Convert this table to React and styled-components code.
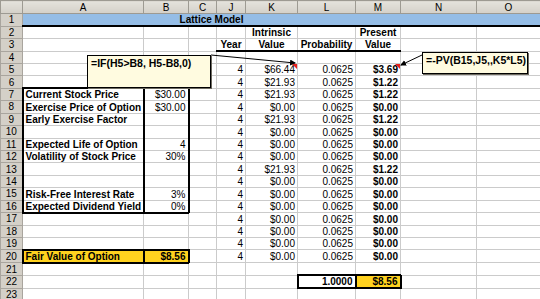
import React from 'react';
import styled, { createGlobalStyle } from "styled-components";

const GlobalStyle = createGlobalStyle`
  html, body {
    margin: 0;
    padding: 0;
    background: #d4d0c8;
  }
`

const Sheet = styled.div`
  position: relative;
  width: 540px;
  height: 299px;
  overflow: hidden;
  background: #d4d0c8;
  font-family: "Liberation Sans", Arial, sans-serif;
`

const Grid = styled.table`
  border-collapse: collapse;
  table-layout: fixed;
  width: 540px;
  background: #fff;
`

const HeadRow = styled.tr`
  height: 13px;
`

const Row = styled.tr`
  height: 12.43px;
`

const ColHead = styled.th`
  background: linear-gradient(#e4e2dc, #d4d0c8);
  border: 1px solid #9d9a92;
  font-weight: normal;
  font-size: 10px;
  line-height: 11px;
  padding: 0;
  color: #000;
  text-align: center;
`

const RowHead = styled.th`
  background: #d4d0c8;
  border: 1px solid #a9a59e;
  font-weight: normal;
  font-size: 10px;
  line-height: 11px;
  padding: 0;
  color: #000;
  text-align: center;
`

const thick = "2px solid #000";
const grid = "1px solid #cbcbcb";

const Cell = styled.td`
  position: relative;
  padding: 0 2px;
  font-size: 10px;
  line-height: 11px;
  vertical-align: bottom;
  white-space: nowrap;
  overflow: visible;
  color: #000;
  text-align: ${p => p.$align || "left"};
  font-weight: ${p => (p.$bold ? "bold" : "normal")};
  background: ${p => p.$bg || "#fff"};
  border-top: ${p => (p.$t ? thick : grid)};
  border-bottom: ${p => (p.$b ? thick : grid)};
  border-left: ${p => (p.$l ? thick : grid)};
  border-right: ${p => (p.$r ? thick : grid)};
`

const Banner = styled.td`
  padding: 0;
  font-size: 10px;
  line-height: 11px;
  font-weight: bold;
  text-align: center;
  background: #95bde6;
  border-top: 1px solid #95bde6;
  border-left: 1px solid #95bde6;
  border-right: 1px solid #95bde6;
  border-bottom: ${thick};
`

const Mark = styled.span`
  position: absolute;
  top: 0;
  right: 0;
  width: 0;
  height: 0;
  border-top: 5px solid #e8201a;
  border-left: 5px solid transparent;
`

const Note = styled.div`
  position: absolute;
  left: ${p => p.$x}px;
  top: ${p => p.$y}px;
  width: ${p => p.$w}px;
  height: ${p => p.$h}px;
  box-sizing: border-box;
  padding: 1px 3px;
  background: #fffbe0;
  border: 1px solid #000;
  box-shadow: 1px 1px 0 #6d6a60;
  font-size: 10.5px;
  line-height: 12px;
  font-weight: bold;
  white-space: nowrap;
`

const Arrows = styled.svg`
  position: absolute;
  left: 0;
  top: 0;
  pointer-events: none;
`

const widths = [22, 121, 45, 28, 29, 52, 58, 45, 76, 64];
const letters = ["A", "B", "C", "J", "K", "L", "M", "N", "O"];

const K = ["$66.44", "$21.93", "$21.93", "$0.00", "$21.93", "$0.00", "$0.00", "$0.00",
  "$21.93", "$0.00", "$0.00", "$0.00", "$0.00", "$0.00", "$0.00", "$0.00"];
const M = ["$3.69", "$1.22", "$1.22", "$0.00", "$1.22", "$0.00", "$0.00", "$0.00",
  "$1.22", "$0.00", "$0.00", "$0.00", "$0.00", "$0.00", "$0.00", "$0.00"];

const inputs = {
  7: ["Current Stock Price", "$30.00"],
  8: ["Exercise Price of Option", "$30.00"],
  9: ["Early Exercise Factor", ""],
  10: ["", ""],
  11: ["Expected Life of Option", "4"],
  12: ["Volatility of Stock Price", "30%"],
  13: ["", ""],
  14: ["", ""],
  15: ["Risk-Free Interest Rate", "3%"],
  16: ["Expected Dividend Yield", "0%"],
};

const YELLOW = "#ffd21f";

function cellsFor(r) {
  const c = letters.map(() => ({ text: "" }));
  // c index: 0 A, 1 B, 2 C, 3 J, 4 K, 5 L, 6 M, 7 N, 8 O
  if (r === 2) {
    c[4] = { text: "Intrinsic", bold: true, align: "center" };
    c[6] = { text: "Present", bold: true, align: "center" };
  }
  if (r === 3) {
    c[3] = { text: "Year", bold: true, align: "center", b: true };
    c[4] = { text: "Value", bold: true, align: "center", b: true };
    c[5] = { text: "Probability", bold: true, align: "center", b: true };
    c[6] = { text: "Value", bold: true, align: "center", b: true };
  }
  if (inputs[r]) {
    const [label, val] = inputs[r];
    const edge = { t: r === 7, b: r === 16 };
    c[0] = { text: label, bold: true, l: true, r: true, ...edge };
    c[1] = { text: val, align: "right", r: true, ...edge };
  }
  if (r === 20) {
    c[0] = { text: "Fair Value of Option", bold: true, bg: YELLOW, t: true, b: true, l: true, r: true };
    c[1] = { text: "$8.56", bold: true, align: "right", bg: YELLOW, t: true, b: true, r: true };
  }
  if (r >= 5 && r <= 20) {
    const i = r - 5;
    c[3] = { text: "4", align: "right" };
    c[4] = { text: K[i], align: "right", mark: r === 5 };
    c[5] = { text: "0.0625", align: "right" };
    c[6] = { text: M[i], align: "right", bold: true, mark: r === 5 };
  }
  if (r === 22) {
    c[5] = { text: "1.0000", align: "right", bold: true, t: true, b: true, l: true, r: true };
    c[6] = { text: "$8.56", align: "right", bold: true, bg: YELLOW, t: true, b: true, r: true };
  }
  return c;
}

function App() {
  const rows = Array.from({ length: 22 }, (_, i) => i + 2);
  return (
    <Sheet>
      <GlobalStyle />
      <Grid>
        <colgroup>
          {widths.map((w, i) => <col key={i} style={{ width: w }} />)}
        </colgroup>
        <tbody>
          <HeadRow>
            <ColHead />
            {letters.map(l => <ColHead key={l}>{l}</ColHead>)}
          </HeadRow>
          <Row>
            <RowHead>1</RowHead>
            <Banner colSpan={7}>Lattice Model</Banner>
            <Banner colSpan={2} />
          </Row>
          {rows.map(r => (
            <Row key={r}>
              <RowHead>{r}</RowHead>
              {cellsFor(r).map((c, i) => (
                <Cell key={i} $align={c.align} $bold={c.bold} $bg={c.bg}
                  $t={c.t} $b={c.b} $l={c.l} $r={c.r}>
                  {c.text}
                  {c.mark && <Mark />}
                </Cell>
              ))}
            </Row>
          ))}
        </tbody>
      </Grid>

      <Note $x={87} $y={55} $w={124} $h={33}>=IF(H5&gt;B8, H5-B8,0)</Note>
      <Note $x={422} $y={52} $w={106} $h={22}>=-PV(B15,J5,,K5*L5)</Note>

      <Arrows width="540" height="299">
        <defs>
          <marker id="head" markerWidth="6" markerHeight="6" refX="5" refY="3" orient="auto">
            <path d="M0,0 L6,3 L0,6 Z" fill="#000" />
          </marker>
        </defs>
        <line x1="211" y1="55" x2="295" y2="63" stroke="#000" strokeWidth="1" markerEnd="url(#head)" />
        <line x1="422" y1="55" x2="401" y2="65" stroke="#000" strokeWidth="1" markerEnd="url(#head)" />
      </Arrows>
    </Sheet>
  );
}

export default App;
